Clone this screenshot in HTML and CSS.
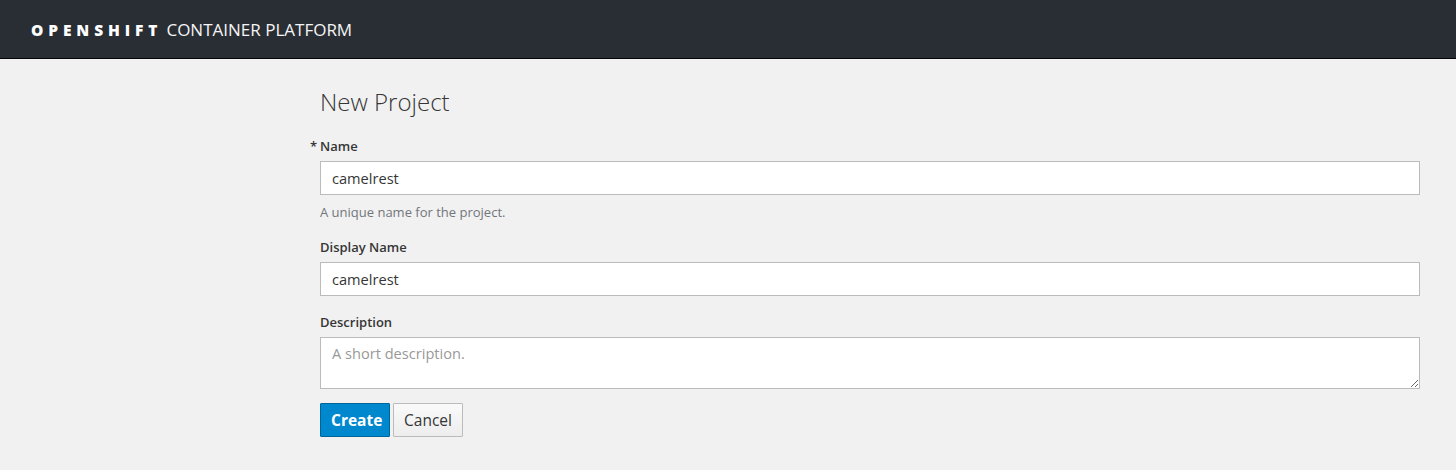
FILE: index.html
```html
<!DOCTYPE html>
<html>
<head>
<meta charset="utf-8">
<link rel="stylesheet" href="styles.css">
</head>
<body>
<header class="navbar">
  <div class="brand"><span class="brand-bold">OPENSHIFT</span><span class="brand-light">CONTAINER PLATFORM</span></div>
</header>
<main class="page">
  <form class="project-form">
    <h1 class="title">New Project</h1>
    <div class="group">
      <label class="label required">Name</label>
      <input class="control" type="text" value="camelrest">
      <div class="help">A unique name for the project.</div>
    </div>
    <div class="group">
      <label class="label">Display Name</label>
      <input class="control" type="text" value="camelrest">
    </div>
    <div class="group">
      <label class="label">Description</label>
      <textarea class="control area" placeholder="A short description."></textarea>
    </div>
    <div class="buttons">
      <button type="button" class="btn btn-primary">Create</button>
      <button type="button" class="btn btn-default">Cancel</button>
    </div>
  </form>
</main>
</body>
</html>
```

FILE: styles.css
```css
html, body {
  margin: 0;
  padding: 0;
  background: #f1f1f1;
  font-family: "Open Sans", "Liberation Sans", sans-serif;
  color: #363636;
}
.navbar {
  height: 58px;
  background: #292e34;
  border-bottom: 1px solid #050505;
  display: flex;
  align-items: center;
  padding-left: 31px;
}
.brand {
  display: flex;
  align-items: baseline;
  color: #fff;
  margin-top: 1px;
}
.brand-bold {
  font-weight: 800;
  font-size: 15.5px;
  letter-spacing: 4.9px;
  margin-right: 4px;
}
.brand-light {
  font-weight: 400;
  font-size: 17px;
  color: #f5f5f5;
}
.page {
  padding-left: 320px;
}
.project-form {
  width: 1100px;
}
.title {
  font-size: 24px;
  font-weight: 300;
  line-height: 1.1;
  margin: 0;
  padding-top: 30px;
  margin-bottom: 22px;
  color: #363636;
}
.group {
  display: flex;
  flex-direction: column;
  margin-bottom: 17px;
}
.label {
  font-size: 13px;
  font-weight: 600;
  line-height: 18px;
  margin-bottom: 6px;
  color: #363636;
  position: relative;
}
.required::before {
  content: "*";
  position: absolute;
  left: -10px;
  top: 0;
}
.control {
  box-sizing: border-box;
  width: 1100px;
  height: 34px;
  border: 1px solid #bbb;
  background: #fff;
  font-family: inherit;
  font-size: 14.6px;
  color: #363636;
  padding: 0 11px;
  margin: 0;
  outline: none;
}
.area {
  height: 52px;
  padding: 5px 11px;
  resize: vertical;
  display: block;
}
.area::placeholder {
  color: #999;
}
.help {
  font-size: 13px;
  line-height: 18px;
  color: #72767b;
  margin-top: 8px;
}
.buttons {
  display: flex;
  gap: 3px;
  margin-top: -3px;
}
.btn {
  box-sizing: border-box;
  height: 34px;
  padding: 0 10px;
  font-family: inherit;
  font-size: 15.5px;
  border: 1px solid;
  border-radius: 1px;
}
.btn-primary {
  width: 70px;
  background: #0088ce;
  border-color: #00659c;
  color: #fff;
  font-weight: 700;
}
.btn-default {
  width: 70px;
  background: linear-gradient(#fafafa, #ededed);
  border-color: #bbb;
  color: #363636;
  font-weight: 400;
}
```
